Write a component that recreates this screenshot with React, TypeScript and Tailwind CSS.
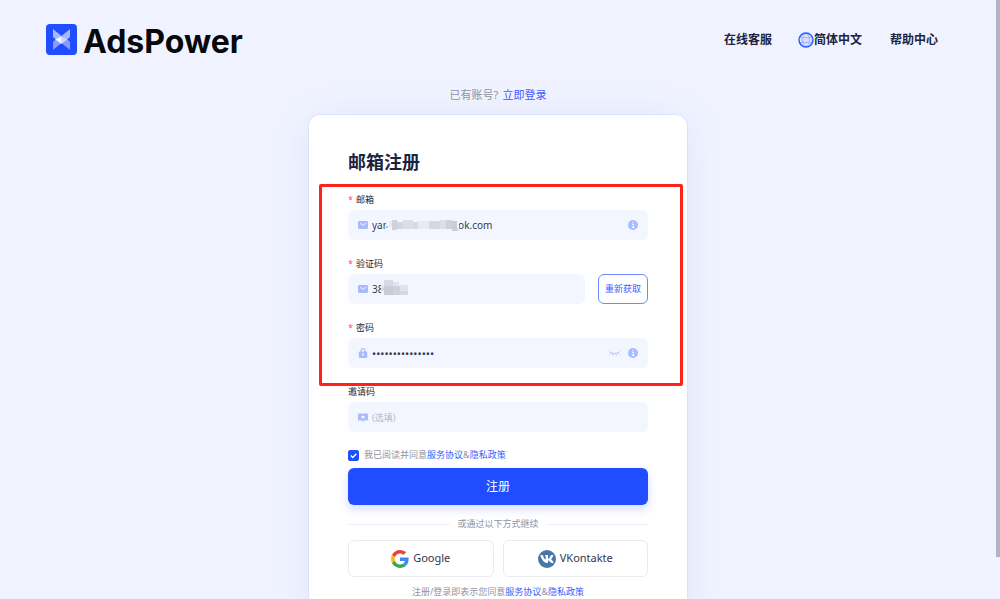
import React from "react";
import { FaVk } from "react-icons/fa";

type IconProps = { className?: string };

function LogoMark() {
  return (
    <svg viewBox="0 0 31 31" className="size-[31px]" aria-hidden="true">
      <rect width="31" height="31" rx="4" fill="#1f4dff" />
      <path d="M7 5l8.500 7v8L7 13z" fill="#fff" opacity=".6" />
      <path d="M24 5l-8.500 7v8L24 13z" fill="#fff" opacity=".6" />
      <path d="M7 26v-8l2.500-2.500 6-2.500v6z" fill="#fff" opacity=".45" />
      <path d="M24 26v-8l-2.500-2.500-6-2.500v6z" fill="#fff" opacity=".45" />
      <path d="M9 15.500l6.500-3.500v8z" fill="#fff" opacity=".75" />
    </svg>
  );
}

function GlobeIcon() {
  return (
    <svg viewBox="0 0 16 16" className="size-4" fill="none" aria-hidden="true">
      <circle cx="8" cy="8" r="6.500" fill="#d5deff" />
      <g stroke="#a3b6ff" strokeWidth="1">
        <ellipse cx="8" cy="8" rx="3.500" ry="6.500" />
        <path d="M2 5.500h12M2 10.500h12" />
      </g>
      <circle cx="8" cy="8" r="7" stroke="#2b57ff" strokeWidth="1.400" />
    </svg>
  );
}

function MailIcon() {
  return (
    <svg viewBox="0 0 10 8" className="w-[10px] h-2" aria-hidden="true">
      <rect width="10" height="8" rx="1" fill="#a9bbff" />
      <path d="M2 2.300l3 2 3-2" fill="none" stroke="#f3f6ff" strokeWidth=".9" />
    </svg>
  );
}

function LockIcon() {
  return (
    <svg viewBox="0 0 10 10" className="size-[10px]" aria-hidden="true">
      <path d="M3 4V2.600a2 2 0 0 1 4 0V4" fill="none" stroke="#a9bbff" strokeWidth="1.100" />
      <rect x=".8" y="3.500" width="8.400" height="6.500" rx="1" fill="#a9bbff" />
      <path d="M5 5.200v2.600M4 6.300h2" stroke="#f3f6ff" strokeWidth="1" />
    </svg>
  );
}

function InviteIcon() {
  return (
    <svg viewBox="0 0 10 9" className="w-[10px] h-[9px]" aria-hidden="true">
      <path d="M1 .5h8a1 1 0 0 1 1 1v5a1 1 0 0 1-1 1H6.200L5 8.800 3.800 7.500H1a1 1 0 0 1-1-1v-5a1 1 0 0 1 1-1z" fill="#a9bbff" />
      <path d="M5 1.900l.6 1.400 1.500.1-1.100 1 .3 1.500L5 5.100l-1.300.8.3-1.500-1.100-1 1.500-.1z" fill="#fff" />
    </svg>
  );
}

function InfoIcon() {
  return (
    <svg viewBox="0 0 10 10" className="size-[10px] shrink-0" aria-hidden="true">
      <circle cx="5" cy="5" r="5" fill="#a9bbff" />
      <path d="M4 4.300h1.300v3.200M3.800 7.500h2.600" fill="none" stroke="#fff" strokeWidth=".9" />
      <circle cx="5" cy="2.600" r=".7" fill="#fff" />
    </svg>
  );
}

function EyeClosedIcon({ className }: IconProps) {
  return (
    <svg viewBox="0 0 11 5" className={className} fill="none" stroke="#a9bbff" strokeWidth=".8" aria-hidden="true">
      <path d="M.3.5C2.500 3 8.500 3 10.700.5M2 1.500L.5 3.500M4.300 2.200l-.7 2.400M6.700 2.200l.7 2.400M9 1.500l1.500 2" />
    </svg>
  );
}

function GoogleIcon() {
  return (
    <svg viewBox="0 0 48 48" className="size-[18px]" aria-hidden="true">
      <path fill="#EA4335" d="M24 9.500c3.540 0 6.710 1.220 9.210 3.600l6.850-6.850C35.900 2.380 30.470 0 24 0 14.620 0 6.510 5.380 2.560 13.220l7.980 6.190C12.430 13.720 17.740 9.500 24 9.500z" />
      <path fill="#4285F4" d="M46.980 24.550c0-1.570-.15-3.090-.38-4.550H24v9.020h12.940c-.58 2.960-2.260 5.480-4.780 7.180l7.730 6c4.510-4.180 7.090-10.360 7.090-17.650z" />
      <path fill="#FBBC05" d="M10.530 28.590c-.48-1.450-.76-2.990-.76-4.590s.27-3.140.76-4.590l-7.980-6.190C.92 16.460 0 20.120 0 24c0 3.880.92 7.540 2.560 10.780l7.970-6.190z" />
      <path fill="#34A853" d="M24 48c6.480 0 11.930-2.130 15.890-5.810l-7.730-6c-2.150 1.450-4.920 2.300-8.160 2.300-6.260 0-11.570-4.220-13.470-9.910l-7.980 6.190C6.510 42.620 14.620 48 24 48z" />
    </svg>
  );
}

// pixelated strips that hide private values
function EmailMask() {
  return (
    <svg viewBox="0 0 73 14" className="absolute left-[14px] top-[8px] w-[73px] h-[14px]" aria-hidden="true">
      <rect width="73" height="14" fill="#f3f6ff" />
      <path d="M0 8h2v2H0z" fill="#b9bcc8" />
      <path d="M3 3h3v6H3z" fill="#e8eaf3" />
      <path d="M6 2h5v10H6z" fill="#cfd1db" />
      <path d="M11 4h6v7h-6z" fill="#d4d6df" />
      <path d="M17 2h10v9H17z" fill="#dcdee7" />
      <path d="M27 4h5v7h-5z" fill="#d6d8e2" />
      <path d="M32 3h11v8H32z" fill="#e8eaf3" />
      <path d="M43 3h11v8H43z" fill="#d5d7e1" />
      <path d="M54 2h6v9h-6z" fill="#dcdee6" />
      <path d="M60 2h6v9h-6z" fill="#ced0da" />
      <path d="M66 3h5v10h-5z" fill="#c9cbd5" />
      <path d="M71 10h2v3h-2z" fill="#dfe1e9" />
    </svg>
  );
}

function CodeMask() {
  return (
    <svg viewBox="0 0 28 18" className="absolute left-[8px] top-[6px] w-[28px] h-[18px]" aria-hidden="true">
      <rect x="1" width="27" height="18" fill="#f3f6ff" />
      <path d="M4 0h9v6H4z" fill="#d8dae3" />
      <path d="M1 5h3v3H1z" fill="#e3e5ee" />
      <path d="M1 8h3v3H1z" fill="#d5d7e1" />
      <path d="M4 6h9v9H4z" fill="#c9cbd6" />
      <path d="M13 2h6v4h-6z" fill="#e3e5ee" />
      <path d="M13 6h7v9h-7z" fill="#cfd1db" />
      <path d="M20 5h8v6h-8z" fill="#e0e2eb" />
      <path d="M20 11h8v4h-8z" fill="#d6d8e2" />
    </svg>
  );
}

type FieldProps = {
  id: string;
  label: string;
  required?: boolean;
  icon: React.ReactNode;
  type?: string;
  defaultValue?: string;
  placeholder?: string;
  mask?: React.ReactNode;
  suffix?: React.ReactNode;
  action?: React.ReactNode;
};

function Field({ id, label, required, icon, type = "text", defaultValue, placeholder, mask, suffix, action }: FieldProps) {
  return (
    <div>
      <label htmlFor={id} className="block text-[9px] leading-5 text-[#1c2340]">
        {required && <span className="text-[#ff4d5e] mr-[3px]">*</span>}
        {label}
      </label>
      <div className="flex gap-[13px]">
        <div className="flex-1 min-w-0 h-[30px] px-[10px] flex items-center rounded-md bg-[#f3f6ff]">
          {icon}
          <div className="relative flex-1 min-w-0 h-full ml-1">
            <input
              id={id}
              type={type}
              defaultValue={defaultValue}
              placeholder={placeholder}
              className={`w-full h-full bg-transparent text-[#343a52] placeholder:text-[9px] placeholder:text-[#b4b8c6] focus:outline-none ${
                type === "password" ? "text-[11px]" : "text-[10px]"
              }`}
            />
            {mask}
          </div>
          {suffix}
        </div>
        {action}
      </div>
    </div>
  );
}

function Terms() {
  return (
    <>
      <a href="#service" className="text-[#3d5cff]">服务协议</a>&amp;
      <a href="#privacy" className="text-[#3d5cff]">隐私政策</a>
    </>
  );
}

export default function App() {
  return (
    <div className="relative h-screen overflow-hidden pr-1 bg-[#f0f3ff] font-['Noto_Sans','Noto_Sans_CJK_SC',sans-serif]">
      <header className="flex items-center justify-between pt-[22px] pl-[46px] pr-[58px]">
        <a href="#home" className="flex items-center gap-[6px]">
          <LogoMark />
          <span className="pt-1 font-['Inter',sans-serif] font-bold text-[32px] leading-[31px] text-[#08090c]">AdsPower</span>
        </a>
        <nav className="flex items-center text-xs font-bold text-[#1c2340]">
          <a href="#support">在线客服</a>
          <button type="button" className="flex items-center ml-[26px] mr-7">
            <GlobeIcon />
            简体中文
          </button>
          <a href="#help">帮助中心</a>
        </nav>
      </header>

      <main className="flex flex-col items-center">
        <p className="mt-[30px] text-[11px] leading-4 text-[#9094a3]">
          已有账号?
          <a href="#login" className="ml-1 text-[#3d5cff]">立即登录</a>
        </p>

        <section className="w-full max-w-[380px] mt-[11px] pt-[35px] pb-10 px-[39px] rounded-xl border border-[#dbe2ff] bg-white shadow-[0_4px_40px_rgba(90,90,180,0.09)]">
          <h1 className="text-lg leading-6 font-bold text-[#1c2340]">邮箱注册</h1>

          <form className="mt-4" onSubmit={(e) => e.preventDefault()}>
            <div className="relative flex flex-col gap-[14px]">
              <Field
                id="email"
                label="邮箱"
                required
                icon={<MailIcon />}
                defaultValue="yan.******@outlook.com"
                mask={<EmailMask />}
                suffix={<InfoIcon />}
              />
              <Field
                id="code"
                label="验证码"
                required
                icon={<MailIcon />}
                defaultValue="38****"
                mask={<CodeMask />}
                action={
                  <button type="button" className="w-[50px] h-[30px] rounded-md border border-[#6d8bff] text-[9px] text-[#3d5cff]">
                    重新获取
                  </button>
                }
              />
              <Field
                id="password"
                label="密码"
                required
                type="password"
                icon={<LockIcon />}
                defaultValue="aaaaaaaaaaaaaaa"
                suffix={
                  <>
                    <button type="button" aria-label="显示密码" className="mr-2">
                      <EyeClosedIcon className="w-[11px] h-[5px]" />
                    </button>
                    <InfoIcon />
                  </>
                }
              />
              {/* highlighted area */}
              <div className="absolute -left-[29px] -right-[35px] -top-[6px] -bottom-[18px] border-3 border-[#ff2216] rounded-xs pointer-events-none z-10" />
            </div>

            <div className="mt-[14px]">
              <Field id="invite" label="邀请码" icon={<InviteIcon />} placeholder="(选填)" />
            </div>

            <div className="flex items-center mt-[14px] h-[18px] text-[9px] text-[#9094a3]">
              <span className="grid mr-[5px]">
                <input
                  id="agree"
                  type="checkbox"
                  defaultChecked
                  className="peer appearance-none size-[11px] rounded-xs border border-[#1f4dff] checked:bg-[#1f4dff] [grid-area:1/1]"
                />
                <svg viewBox="0 0 11 11" className="size-[11px] pointer-events-none [grid-area:1/1] invisible peer-checked:visible" aria-hidden="true">
                  <path d="M2.800 5.500l2 2 3.600-3.800" fill="none" stroke="#fff" strokeWidth="1.400" />
                </svg>
              </span>
              <label htmlFor="agree">
                我已阅读并同意<Terms />
              </label>
            </div>

            <button type="submit" className="block w-full h-[37px] mt-1 rounded-md bg-[#1f4dff] text-xs text-white shadow-[0_4px_10px_rgba(31,77,255,0.2)]">
              注册
            </button>
          </form>

          <div className="flex items-center gap-2 mt-[11px] text-[9px] leading-4 text-[#9094a3]">
            <span className="flex-1 h-px bg-[#eff0f4]" />
            或通过以下方式继续
            <span className="flex-1 h-px bg-[#eff0f4]" />
          </div>

          <div className="grid grid-cols-2 gap-[9px] mt-2 text-[11px] text-[#32374d]">
            <button type="button" className="flex items-center justify-center gap-1 h-[37px] rounded-md border border-[#e9eaf0]">
              <GoogleIcon />
              Google
            </button>
            <button type="button" className="flex items-center justify-center gap-1 h-[37px] rounded-md border border-[#e9eaf0]">
              <span className="flex items-center justify-center size-[18px] rounded-full bg-[#4a76a8]">
                <FaVk className="size-[14px] text-white" />
              </span>
              VKontakte
            </button>
          </div>

          <p className="mt-[7px] text-center text-[9px] leading-4 text-[#9094a3]">
            注册/登录即表示您同意<Terms />
          </p>
        </section>
      </main>

      {/* scrollbar thumb */}
      <div className="absolute right-0 top-0 w-1 h-[93%] bg-[#b1b4c9]" />
    </div>
  );
}
